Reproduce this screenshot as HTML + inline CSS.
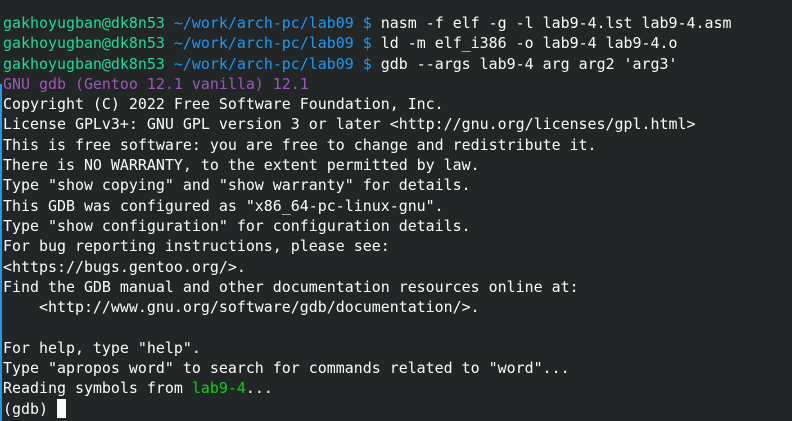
<!DOCTYPE html>
<html><head><meta charset="utf-8"><style>
html,body{margin:0;padding:0;background:#232627;width:792px;height:421px;overflow:hidden}
pre{margin:0;position:absolute;left:3px;top:13px;font-family:"DejaVu Sans Mono","Liberation Mono",monospace;font-size:14.95px;line-height:20.3px;color:#fcfcfc;white-space:pre}
.g{color:#1cdc9a}.b{color:#1d99f3}.p{color:#9b59b6}.l{color:#11d116}
.bar{position:absolute;left:0;top:84px;width:2px;height:337px;background:#1d99f3}
.cur{display:inline-block;width:9px;height:19px;background:#fcfcfc;vertical-align:-4px}
</style></head><body>
<div class="bar"></div>
<pre><span class="g">gakhoyugban@dk8n53</span> <span class="b">~/work/arch-pc/lab09 $</span> nasm -f elf -g -l lab9-4.lst lab9-4.asm
<span class="g">gakhoyugban@dk8n53</span> <span class="b">~/work/arch-pc/lab09 $</span> ld -m elf_i386 -o lab9-4 lab9-4.o
<span class="g">gakhoyugban@dk8n53</span> <span class="b">~/work/arch-pc/lab09 $</span> gdb --args lab9-4 arg arg2 'arg3'
<span class="p">GNU gdb (Gentoo 12.1 vanilla) 12.1</span>
Copyright (C) 2022 Free Software Foundation, Inc.
License GPLv3+: GNU GPL version 3 or later &lt;http://gnu.org/licenses/gpl.html&gt;
This is free software: you are free to change and redistribute it.
There is NO WARRANTY, to the extent permitted by law.
Type "show copying" and "show warranty" for details.
This GDB was configured as "x86_64-pc-linux-gnu".
Type "show configuration" for configuration details.
For bug reporting instructions, please see:
&lt;https://bugs.gentoo.org/&gt;.
Find the GDB manual and other documentation resources online at:
    &lt;http://www.gnu.org/software/gdb/documentation/&gt;.

For help, type "help".
Type "apropos word" to search for commands related to "word"...
Reading symbols from <span class="l">lab9-4</span>...
(gdb) <span class="cur"></span></pre>
</body></html>
